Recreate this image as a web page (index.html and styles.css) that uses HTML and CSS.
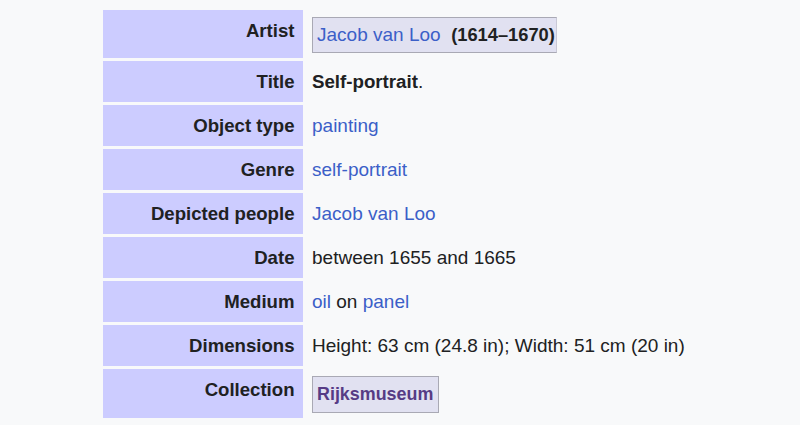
FILE: index.html
```html
<!DOCTYPE html>
<html lang="en">
<head>
<meta charset="utf-8">
<title>Self-portrait – Jacob van Loo</title>
<link rel="stylesheet" href="styles.css">
</head>
<body>
<table class="info">
  <tbody>
    <tr>
      <th class="label">Artist</th>
      <td class="value boxed"><span class="box creator"><a href="#" class="link">Jacob van Loo</a>&nbsp; <b class="strong">(1614–1670)</b></span></td>
    </tr>
    <tr>
      <th class="label">Title</th>
      <td class="value"><b class="strong title">Self-portrait</b>.</td>
    </tr>
    <tr>
      <th class="label">Object type</th>
      <td class="value"><a href="#" class="link">painting</a></td>
    </tr>
    <tr>
      <th class="label">Genre</th>
      <td class="value"><a href="#" class="link">self-portrait</a></td>
    </tr>
    <tr>
      <th class="label">Depicted people</th>
      <td class="value"><a href="#" class="link">Jacob van Loo</a></td>
    </tr>
    <tr>
      <th class="label">Date</th>
      <td class="value">between 1655 and 1665</td>
    </tr>
    <tr>
      <th class="label">Medium</th>
      <td class="value"><a href="#" class="link">oil</a> on <a href="#" class="link">panel</a></td>
    </tr>
    <tr>
      <th class="label">Dimensions</th>
      <td class="value">Height: 63 cm (24.8 in); Width: 51 cm (20 in)</td>
    </tr>
    <tr>
      <th class="label">Collection</th>
      <td class="value boxed"><span class="box inst"><a href="#" class="link visited strong">Rijksmuseum</a></span></td>
    </tr>
  </tbody>
</table>
</body>
</html>
```

FILE: styles.css
```css
html, body {
  margin: 0;
  background: #f8f9fa;
}

body {
  padding: 7px 0 0 100px;
  font-family: "Liberation Sans", Arial, sans-serif;
  font-size: 19px;
  color: #202122;
}

.info {
  border-collapse: separate;
  border-spacing: 3px;
}

.label {
  box-sizing: border-box;
  width: 200px;
  background: #ccccff;
  text-align: right;
  vertical-align: top;
  font-weight: bold;
  font-size: 18.6px;
  line-height: 22px;
  padding: 9.5px 8.5px 9.5px 6px;
  white-space: nowrap;
}

.value {
  text-align: left;
  vertical-align: middle;
  line-height: 22px;
  padding: 9.5px 6px;
  white-space: nowrap;
}

.value.boxed {
  padding: 6.5px 6px 5.5px 6px;
}

.strong {
  font-weight: bold;
  font-size: 18.3px;
}

.strong.title {
  font-size: 18.7px;
}

.link {
  color: #3b5fc8;
  text-decoration: none;
}

.link.visited {
  color: #563b85;
}

.box {
  display: inline-block;
  background: #e1e1f1;
  border: 1px solid #a9a9b4;
  padding: 6px 4px;
  line-height: 22px;
}

.box.creator {
  padding-right: 1px;
  border-right-color: #c9c9d6;
}

.box.inst {
  padding: 6.5px 5px 6.5px 4px;
}

.box.inst .strong {
  font-size: 17.9px;
}
```
